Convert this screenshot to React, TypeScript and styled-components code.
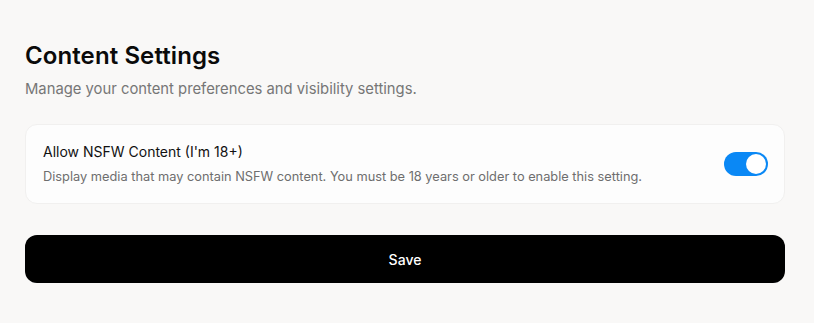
import React, { useState } from "react";
import styled, { createGlobalStyle } from "styled-components";

const Global = createGlobalStyle`
  html, body { margin: 0; padding: 0; background: #f9f8f7; }
  body { font-family: Inter, "Noto Sans", sans-serif; -webkit-font-smoothing: antialiased; }
  * { box-sizing: border-box; }
`;

const Page = styled.div`
  padding: 41px 29px 0 25px;
  display: flex;
  flex-direction: column;
`;

const Title = styled.h1`
  margin: 0;
  font-size: 24px;
  line-height: 30px;
  font-weight: 600;
  color: #0a0a0a;
  letter-spacing: 0.1px;
`;

const Subtitle = styled.p`
  margin: 7px 0 0;
  font-size: 14.8px;
  line-height: 22px;
  color: #767676;
`;

const Card = styled.div`
  margin-top: 24px;
  background: #fdfdfd;
  border: 1px solid #f1f0ef;
  border-radius: 12px;
  padding: 17px 16px 17px 17px;
  display: flex;
  align-items: center;
  justify-content: space-between;
  gap: 16px;
`;

const TextCol = styled.div`
  display: flex;
  flex-direction: column;
  gap: 6px;
`;

const Label = styled.div`
  font-size: 14px;
  line-height: 20px;
  font-weight: 400;
  color: #111;
`;

const Desc = styled.div`
  font-size: 12.8px;
  line-height: 18px;
  color: #6e6e6e;
`;

const Track = styled.button<{ $on: boolean }>`
  width: 44px;
  height: 24px;
  border-radius: 12px;
  border: none;
  padding: 2px;
  background: ${(p) => (p.$on ? "#0a88f5" : "#d4d4d4")};
  display: flex;
  justify-content: ${(p) => (p.$on ? "flex-end" : "flex-start")};
  align-items: center;
  cursor: pointer;
  flex-shrink: 0;
`;

const Knob = styled.span`
  width: 20px;
  height: 20px;
  border-radius: 50%;
  background: #fff;
`;

const SaveButton = styled.button`
  margin-top: 31px;
  height: 48px;
  width: 100%;
  border: none;
  border-radius: 12px;
  background: #000;
  color: #fff;
  font-family: Inter, "Noto Sans", sans-serif;
  font-size: 14px;
  font-weight: 500;
  cursor: pointer;
`;

export default function App() {
  const [on, setOn] = useState(true);
  return (
    <>
      <Global />
      <Page>
        <Title>Content Settings</Title>
        <Subtitle>Manage your content preferences and visibility settings.</Subtitle>
        <Card>
          <TextCol>
            <Label>Allow NSFW Content (I'm 18+)</Label>
            <Desc>
              Display media that may contain NSFW content. You must be 18 years or older to enable this setting.
            </Desc>
          </TextCol>
          <Track $on={on} onClick={() => setOn(!on)} aria-label="toggle">
            <Knob />
          </Track>
        </Card>
        <SaveButton>Save</SaveButton>
      </Page>
    </>
  );
}
